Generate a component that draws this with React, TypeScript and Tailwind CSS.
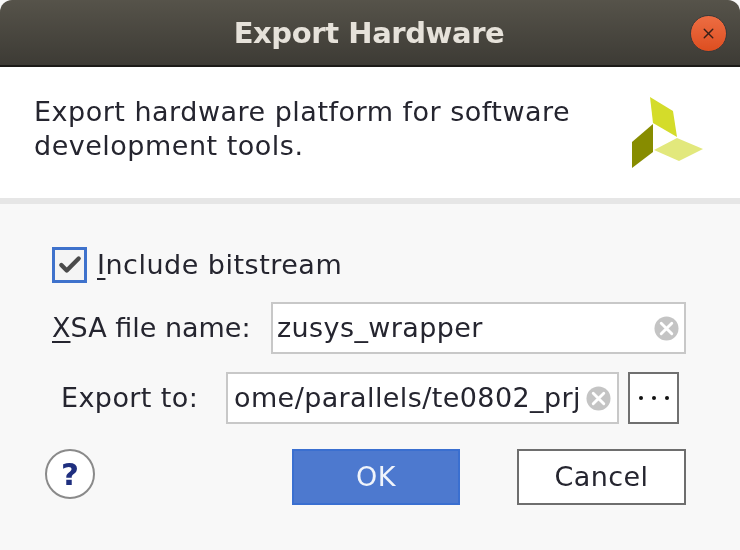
import { Check, X } from "lucide-react";

const font = "font-['DejaVu_Sans',sans-serif]";

function ClearIcon({ className }: { className?: string }) {
  return (
    <svg viewBox="0 0 26 26" className={className}>
      <circle cx="13" cy="13" r="12.5" fill="#c4c4c4" />
      <path d="M7.5 7.5l11 11M18.5 7.5l-11 11" stroke="#fff" strokeWidth="3" strokeLinecap="round" />
    </svg>
  );
}

function XilinxLogo() {
  return (
    <svg viewBox="0 0 74 74" className="w-[74px] h-[74px]">
      <polygon points="20,2 43,16 47,42 23,28" fill="#d4dc2a" />
      <polygon points="23,29 23,57 2,73 2,47" fill="#878c00" />
      <polygon points="24,55 47,43 73,54 49,66" fill="#e2e87c" />
    </svg>
  );
}

export default function App() {
  return (
    <div className={`w-[740px] h-[550px] overflow-hidden flex flex-col bg-[#f8f8f8] text-[#25252f] blur-[0.5px] ${font}`}>
      {/* Title bar */}
      <div className="relative h-[67px] shrink-0 rounded-t-[12px] border-b-2 border-[#1c1b18] bg-gradient-to-b from-[#56534a] to-[#3d3b35] flex items-center justify-center">
        <span className="text-[29px] font-bold text-[#e6e2da] leading-none tracking-[-0.4px] pt-[1px] pr-[2px]">
          Export Hardware
        </span>
        <div className="absolute left-[690px] top-[15px] w-[37px] h-[37px] rounded-full border border-[#3a3a3a] bg-gradient-to-b from-[#ed6d42] to-[#dd4e1f] flex items-center justify-center">
          <X size={17} strokeWidth={2} className="text-[#3a2018]" />
        </div>
      </div>

      {/* Description */}
      <div className="h-[137px] shrink-0 bg-white flex justify-between pl-[34px] pr-[36px] pt-[28px] border-b-[6px] border-[#e6e6e6]">
        <p className="text-[27px] leading-[34px] tracking-[0.5px] whitespace-nowrap">
          Export hardware platform for software
          <br />
          development tools.
        </p>
        <XilinxLogo />
      </div>

      {/* Form */}
      <div className="flex-1 flex flex-col pl-[52px] pr-[54px] pt-[43px] text-[27px] tracking-[0.4px]">
        <div className="flex items-center h-[36px]">
          <div className="w-[35px] h-[36px] border-[3px] border-[#3f72cc] bg-[#f4f4f4] flex items-center justify-center">
            <Check size={26} strokeWidth={4} className="text-[#4a4a4a]" />
          </div>
          <span className="ml-[10px] tracking-[0.5px]">
            <span className="underline underline-offset-4 decoration-2">I</span>nclude bitstream
          </span>
        </div>

        <div className="flex items-center mt-[19px] h-[52px]">
          <span className="w-[219px] whitespace-nowrap tracking-normal">
            <span className="underline underline-offset-4 decoration-2">X</span>SA file name:
          </span>
          <div className="flex-1 h-full bg-white border-2 border-[#c8c8c8] flex items-center pl-[4px] pr-[5px]">
            <span className="flex-1">zusys_wrapper</span>
            <ClearIcon className="w-[25px] h-[25px]" />
          </div>
        </div>

        <div className="flex items-center mt-[18px] h-[52px]">
          <span className="w-[174px] pl-[9px] whitespace-nowrap">Export to:</span>
          <div className="w-[393px] h-full bg-white border-2 border-[#c8c8c8] flex items-center pl-[6px] pr-[6px]">
            <span className="flex-1 overflow-hidden whitespace-nowrap">ome/parallels/te0802_prj</span>
            <ClearIcon className="w-[25px] h-[25px] shrink-0" />
          </div>
          <div className="ml-[9px] w-[51px] h-full bg-white border-2 border-[#707070] flex items-center justify-center gap-[9px]">
            <span className="w-[4px] h-[4px] rounded-full bg-[#111]" />
            <span className="w-[4px] h-[4px] rounded-full bg-[#111]" />
            <span className="w-[4px] h-[4px] rounded-full bg-[#111]" />
          </div>
        </div>

        {/* Footer */}
        <div className="flex items-start mt-[25px] -ml-[7px]">
          <div className="w-[50px] h-[50px] rounded-full bg-white border-2 border-[#8a8a8a] flex items-center justify-center text-[31px] font-bold text-[#1f2f7f] tracking-normal">
            ?
          </div>
          <button className="ml-[197px] w-[168px] h-[56px] bg-[#4d79cf] border-2 border-[#3a6fd0] text-[#f0f4fb] text-[27px]">
            OK
          </button>
          <button className="ml-[57px] w-[169px] h-[56px] bg-white border-2 border-[#6e6e6e] text-[#25252f] text-[27px]">
            Cancel
          </button>
        </div>
      </div>
    </div>
  );
}
